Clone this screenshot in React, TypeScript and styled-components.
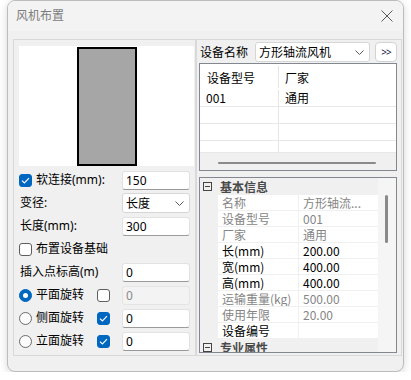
import React from 'react'
import styled, { createGlobalStyle } from 'styled-components'

const GlobalStyle = createGlobalStyle`
  html, body {
    margin: 0;
    padding: 0;
    background: #ffffff;
  }
  body {
    font-family: "Noto Sans", "Noto Sans CJK SC", sans-serif;
    font-size: 12px;
    color: #000;
  }
`

const Window = styled.div`
  margin-left: 7px;
  width: 397px;
  height: 372px;
  box-sizing: border-box;
  border: 1px solid #bcbcbc;
  border-radius: 8px;
  background: #f0f0f0;
  box-shadow: 0 2px 9px rgba(0, 0, 0, 0.16);
  overflow: hidden;
  display: flex;
  flex-direction: column;
`

const TitleBar = styled.div`
  height: 30px;
  flex: none;
  display: flex;
  align-items: center;
  justify-content: space-between;
  padding: 0 10px 0 8px;
  background: #f3f3f3;
`

const Title = styled.span`
  color: #7c7c7c;
  font-size: 12px;
  line-height: 14px;
`

const Body = styled.div`
  flex: 1;
  display: flex;
  padding: 8px 1px 15px 5px;
`

const LeftFrame = styled.div`
  width: 183px;
  height: 317px;
  box-sizing: border-box;
  border: 1px solid #d9d9d9;
  padding: 6px 0 0 5px;
  display: flex;
  flex-direction: column;
`

const Preview = styled.div`
  width: 175px;
  height: 120px;
  background: #ffffff;
  display: flex;
  justify-content: center;
  padding-top: 1px;
  box-sizing: border-box;
  margin-bottom: 4px;
`

const FanShape = styled.div`
  width: 60px;
  height: 119px;
  box-sizing: border-box;
  border: 2px solid #000;
  background: #a6a6a6;
`

const Rows = styled.div`
  display: flex;
  flex-direction: column;
  gap: 3px;
`

const Row = styled.div`
  height: 20px;
  display: grid;
  grid-template-columns: 1fr 68px;
  align-items: center;
  padding-right: 5px;
`

const LabelCell = styled.div`
  display: flex;
  align-items: center;
  gap: 4px;
  line-height: 14px;
  white-space: nowrap;
`

const Text = styled.span<{ $indent?: boolean }>`
  padding-left: ${p => (p.$indent ? '1px' : '0')};
`

const Box = styled.span<{ $checked?: boolean; $push?: boolean }>`
  width: 13px;
  height: 13px;
  box-sizing: border-box;
  border-radius: 3px;
  flex: none;
  display: flex;
  align-items: center;
  justify-content: center;
  background: ${p => (p.$checked ? '#0067c0' : '#ffffff')};
  border: 1px solid ${p => (p.$checked ? '#0067c0' : '#5e5e5e')};
  margin-left: ${p => (p.$push ? 'auto' : '0')};
  margin-right: ${p => (p.$push ? '12px' : '0')};
`

const Radio = styled.span<{ $checked?: boolean }>`
  width: 13px;
  height: 13px;
  box-sizing: border-box;
  border-radius: 50%;
  flex: none;
  display: flex;
  align-items: center;
  justify-content: center;
  background: ${p => (p.$checked ? '#0067c0' : '#fbfbfb')};
  border: 1px solid ${p => (p.$checked ? '#0067c0' : '#6b6b6b')};
  &::after {
    content: '';
    display: ${p => (p.$checked ? 'block' : 'none')};
    width: 5px;
    height: 5px;
    border-radius: 50%;
    background: #ffffff;
  }
`

const Field = styled.input<{ $disabled?: boolean }>`
  width: 68px;
  height: 19px;
  box-sizing: border-box;
  margin: 0;
  padding: 0 3px;
  font-family: "Noto Sans", "Noto Sans CJK SC", sans-serif;
  font-size: 12px;
  color: ${p => (p.$disabled ? '#8a8a8a' : '#000')};
  background: ${p => (p.$disabled ? '#f3f3f3' : '#ffffff')};
  border: 1px solid ${p => (p.$disabled ? '#e4e4e4' : '#e2e2e2')};
  border-bottom-color: ${p => (p.$disabled ? '#e4e4e4' : '#9a9a9a')};
  border-radius: 3px;
  outline: none;
`

const Select = styled.div<{ $w: number }>`
  width: ${p => p.$w}px;
  height: 20px;
  box-sizing: border-box;
  display: flex;
  align-items: center;
  justify-content: space-between;
  padding: 0 5px 0 3px;
  background: #ffffff;
  border: 1px solid #d6d6d6;
  border-radius: 3px;
  line-height: 14px;
  font-family: "Noto Sans CJK SC", sans-serif;
`

const RightFrame = styled.div`
  width: 206px;
  height: 317px;
  box-sizing: border-box;
  border: 1px solid #d9d9d9;
  padding: 2px 4px 2px 2px;
  display: flex;
  flex-direction: column;
`

const TopRow = styled.div`
  height: 20px;
  display: flex;
  align-items: center;
  margin-bottom: 1px;
`

const TopLabel = styled.span`
  margin: 0 7px 0 1px;
  font-family: "Noto Sans CJK SC", sans-serif;
  line-height: 14px;
`

const MoreButton = styled.div`
  width: 22px;
  height: 20px;
  box-sizing: border-box;
  margin-left: 5px;
  border: 1px solid #d2d2d2;
  border-radius: 4px;
  background: #ffffff;
  display: flex;
  align-items: center;
  justify-content: center;
  font-size: 10px;
  letter-spacing: -1px;
  color: #1a1a4a;
`

const Table = styled.div`
  height: 108px;
  box-sizing: border-box;
  border: 1px solid #828790;
  background: #ffffff;
  display: flex;
  flex-direction: column;
  overflow: hidden;
  font-family: "Noto Sans CJK SC", sans-serif;
`

const TableRow = styled.div<{ $h: number; $header?: boolean }>`
  height: ${p => p.$h}px;
  flex: none;
  box-sizing: border-box;
  display: grid;
  grid-template-columns: 79px 1fr;
  border-bottom: ${p => (p.$header ? 'none' : '1px solid #e8e8e8')};
  line-height: 14px;
`

const TableCell = styled.div<{ $first?: boolean; $header?: boolean }>`
  display: flex;
  align-items: center;
  padding-left: ${p => (p.$first ? (p.$header ? '7px' : '6px') : '6px')};
  border-right: ${p => (p.$first ? '1px solid #e5e5e5' : 'none')};
  margin: ${p => (p.$header && p.$first ? '2px 0' : '0')};
  padding-top: ${p => (p.$header ? '2px' : '0')};
`

const HScroll = styled.div`
  height: 17px;
  flex: none;
  background: #f0f0f0;
  display: flex;
  align-items: center;
  padding-left: 18px;
`

const HThumb = styled.div`
  width: 158px;
  height: 2px;
  margin-top: 2px;
  border-radius: 1px;
  background: #8a8a8a;
`

const PropGrid = styled.div`
  margin-top: 6px;
  height: 176px;
  box-sizing: border-box;
  border: 1px solid #828790;
  display: grid;
  grid-template-columns: 178px 18px;
  overflow: hidden;
  font-family: "Noto Sans CJK SC", sans-serif;
  background: #ffffff;
`

const PropList = styled.div`
  display: flex;
  flex-direction: column;
`

const Category = styled.div`
  height: 17px;
  flex: none;
  background: #f0f0f0;
  display: flex;
  align-items: center;
  padding-left: 3px;
  font-weight: bold;
  color: #4a4a4a;
  line-height: 14px;
`

const Toggle = styled.span`
  width: 9px;
  height: 9px;
  box-sizing: border-box;
  border: 1px solid #444;
  margin-right: 8px;
  display: flex;
  align-items: center;
  justify-content: center;
  &::after {
    content: '';
    width: 5px;
    height: 1px;
    background: #444;
  }
`

const PropRow = styled.div`
  height: 16px;
  flex: none;
  box-sizing: border-box;
  display: grid;
  grid-template-columns: 17px 80px 80px;
  column-gap: 1px;
  background: #f0f0f0;
  border-bottom: 1px solid #f0f0f0;
  line-height: 14px;
`

const PropCell = styled.div<{ $dim?: boolean }>`
  background: #ffffff;
  padding-left: 4px;
  display: flex;
  align-items: center;
  white-space: nowrap;
  overflow: hidden;
  color: ${p => (p.$dim ? '#858585' : '#000')};
`

const Gutter = styled.div`
  background: #f0f0f0;
`

const VScroll = styled.div`
  background: #f5f5f5;
  padding: 17px 0 0 7px;
`

const VThumb = styled.div`
  width: 3px;
  height: 48px;
  border-radius: 2px;
  background: #8a8a8a;
`

const CheckMark = () => (
  <svg width="9" height="7" viewBox="0 0 9 7">
    <polyline points="1,3.6 3.4,6 8,1.2" fill="none" stroke="#fff" strokeWidth="1.2" />
  </svg>
)

const Chevron = () => (
  <svg width="9" height="5" viewBox="0 0 9 5">
    <polyline points="0.5,0.5 4.5,4.5 8.5,0.5" fill="none" stroke="#5a5a5a" strokeWidth="1" />
  </svg>
)

const CloseIcon = () => (
  <svg width="12" height="12" viewBox="0 0 12 12">
    <path d="M0.5 0.5 L11.5 11.5 M11.5 0.5 L0.5 11.5" stroke="#5a5a5a" strokeWidth="1" />
  </svg>
)

type Prop = { name: string; value: string; dim?: boolean }

const props: Prop[] = [
  { name: '名称', value: '方形轴流...', dim: true },
  { name: '设备型号', value: '001', dim: true },
  { name: '厂家', value: '通用', dim: true },
  { name: '长(mm)', value: '200.00' },
  { name: '宽(mm)', value: '400.00' },
  { name: '高(mm)', value: '400.00' },
  { name: '运输重量(kg)', value: '500.00', dim: true },
  { name: '使用年限', value: '20.00', dim: true },
  { name: '设备编号', value: '' },
]

const rotations = [
  { label: '平面旋转', radio: true, check: false, disabled: true },
  { label: '侧面旋转', radio: false, check: true, disabled: false },
  { label: '立面旋转', radio: false, check: true, disabled: false },
]

export default function App() {
  return (
    <>
      <GlobalStyle />
      <Window>
        <TitleBar>
          <Title>风机布置</Title>
          <CloseIcon />
        </TitleBar>
        <Body>
          <LeftFrame>
            <Preview>
              <FanShape />
            </Preview>
            <Rows>
              <Row>
                <LabelCell>
                  <Box $checked><CheckMark /></Box>
                  <Text>软连接(mm):</Text>
                </LabelCell>
                <Field readOnly value="150" />
              </Row>
              <Row>
                <LabelCell><Text $indent>变径:</Text></LabelCell>
                <Select $w={68}>
                  <span>长度</span>
                  <Chevron />
                </Select>
              </Row>
              <Row>
                <LabelCell><Text $indent>长度(mm):</Text></LabelCell>
                <Field readOnly value="300" />
              </Row>
              <Row>
                <LabelCell>
                  <Box />
                  <Text>布置设备基础</Text>
                </LabelCell>
              </Row>
              <Row>
                <LabelCell><Text $indent>插入点标高(m)</Text></LabelCell>
                <Field readOnly value="0" />
              </Row>
              {rotations.map(r => (
                <Row key={r.label}>
                  <LabelCell>
                    <Radio $checked={r.radio} />
                    <Text>{r.label}</Text>
                    <Box $checked={r.check} $push>{r.check && <CheckMark />}</Box>
                  </LabelCell>
                  <Field readOnly value="0" $disabled={r.disabled} />
                </Row>
              ))}
            </Rows>
          </LeftFrame>

          <RightFrame>
            <TopRow>
              <TopLabel>设备名称</TopLabel>
              <Select $w={115}>
                <span>方形轴流风机</span>
                <Chevron />
              </Select>
              <MoreButton>&gt;&gt;</MoreButton>
            </TopRow>
            <Table>
              <TableRow $h={26} $header>
                <TableCell $first $header>设备型号</TableCell>
                <TableCell $header>厂家</TableCell>
              </TableRow>
              <TableRow $h={17}>
                <TableCell $first>001</TableCell>
                <TableCell>通用</TableCell>
              </TableRow>
              <TableRow $h={17}>
                <TableCell $first />
                <TableCell />
              </TableRow>
              <TableRow $h={17}>
                <TableCell $first />
                <TableCell />
              </TableRow>
              <TableRow $h={12}>
                <TableCell $first />
                <TableCell />
              </TableRow>
              <HScroll>
                <HThumb />
              </HScroll>
            </Table>
            <PropGrid>
              <PropList>
                <Category>
                  <Toggle />
                  基本信息
                </Category>
                {props.map(p => (
                  <PropRow key={p.name}>
                    <Gutter />
                    <PropCell $dim={p.dim}>{p.name}</PropCell>
                    <PropCell $dim={p.dim}>{p.value}</PropCell>
                  </PropRow>
                ))}
                <Category>
                  <Toggle />
                  专业属性
                </Category>
              </PropList>
              <VScroll>
                <VThumb />
              </VScroll>
            </PropGrid>
          </RightFrame>
        </Body>
      </Window>
    </>
  )
}
